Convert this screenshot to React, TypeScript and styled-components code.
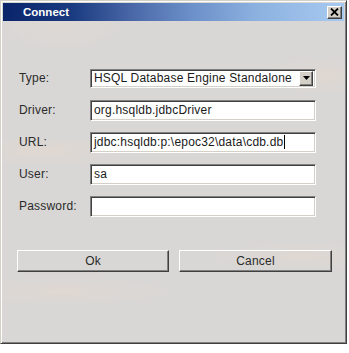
import * as React from 'react';
import styled, { createGlobalStyle } from 'styled-components';

const Global = createGlobalStyle`
  html, body {
    margin: 0;
    padding: 0;
    background: #ffffff;
  }
  * {
    box-sizing: border-box;
  }
`;

const Window = styled.div`
  width: 347px;
  height: 344px;
  display: flex;
  flex-direction: column;
  padding: 2px;
  border-top: 1px solid #d4d0c8;
  border-left: 1px solid #d4d0c8;
  border-right: 1px solid #404040;
  border-bottom: 1px solid #404040;
  box-shadow: inset 1px 1px 0 #ffffff, inset -1px -1px 0 #808080;
  background:
    radial-gradient(ellipse 90px 14px at 40px 150px, rgba(232, 216, 206, 0.45), transparent),
    radial-gradient(ellipse 70px 16px at 320px 75px, rgba(232, 216, 206, 0.45), transparent),
    radial-gradient(ellipse 110px 14px at 60px 290px, rgba(232, 216, 206, 0.4), transparent),
    radial-gradient(ellipse 90px 12px at 300px 255px, rgba(232, 216, 206, 0.4), transparent),
    radial-gradient(ellipse 60px 30px at 60px 20px, rgba(232, 220, 212, 0.4), transparent),
    #d9d7d5;
  font-family: 'Liberation Sans', Arial, sans-serif;
`;

const TitleBar = styled.div`
  height: 18px;
  display: flex;
  align-items: center;
  justify-content: space-between;
  padding: 0 2px 0 20px;
  background: linear-gradient(
    to right,
    #0a246a 0%,
    #1a3a80 20%,
    #4a68a8 38%,
    #6b8fc8 55%,
    #8eb2e0 75%,
    #a6caf0 100%
  );
`;

const Title = styled.span`
  color: #ffffff;
  font-weight: bold;
  font-size: 11.5px;
`;

const CloseButton = styled.button`
  width: 15px;
  height: 13px;
  padding: 0;
  display: flex;
  align-items: center;
  justify-content: center;
  background: #d4d0c8;
  border-top: 1px solid #ffffff;
  border-left: 1px solid #ffffff;
  border-right: 1px solid #404040;
  border-bottom: 1px solid #404040;
  box-shadow: inset -1px -1px 0 #808080;
`;

const Form = styled.div`
  display: grid;
  grid-template-columns: 71px 226px;
  grid-auto-rows: 32px;
  align-items: center;
  padding: 41px 0 0 16px;
`;

const Label = styled.span`
  font-size: 12px;
  letter-spacing: 0.2px;
  color: #2a2a2a;
`;

const Field = styled.div<{ $h?: number }>`
  height: ${p => p.$h || 21}px;
  display: flex;
  align-items: center;
  background: #ffffff;
  border-top: 1px solid #808080;
  border-left: 1px solid #808080;
  border-right: 1px solid #ffffff;
  border-bottom: 1px solid #ffffff;
  box-shadow: inset 1px 1px 0 #404040, inset -1px -1px 0 #d4d0c8;
  padding: 0 2px 0 2px;
  font-size: 12px;
  letter-spacing: 0.2px;
  color: #1a1a1a;
  white-space: nowrap;
  overflow: hidden;
`;

const FieldText = styled.span`
  flex: 1;
  padding-left: 1px;
`;

const Caret = styled.span`
  display: inline-block;
  width: 1px;
  height: 14px;
  margin-left: 1px;
  vertical-align: middle;
  background: #000000;
`;

const DropButton = styled.span`
  width: 14px;
  height: 15px;
  display: flex;
  align-items: center;
  justify-content: center;
  background: #d4d0c8;
  border-top: 1px solid #ffffff;
  border-left: 1px solid #ffffff;
  border-right: 1px solid #404040;
  border-bottom: 1px solid #404040;
  box-shadow: inset -1px -1px 0 #808080;
`;

const Buttons = styled.div`
  display: flex;
  gap: 10px;
  padding: 28px 0 0 14px;
`;

const PushButton = styled.button<{ $w: number }>`
  width: ${p => p.$w}px;
  height: 22px;
  padding: 0;
  background: transparent;
  border-top: 1px solid #ffffff;
  border-left: 1px solid #ffffff;
  border-right: 1px solid #404040;
  border-bottom: 1px solid #404040;
  box-shadow: inset -1px -1px 0 #808080;
  font-family: 'Liberation Sans', Arial, sans-serif;
  font-size: 12px;
  letter-spacing: 0.2px;
  color: #2a2a2a;
`;

export default function App() {
  return (
    <>
      <Global />
      <Window>
        <TitleBar>
          <Title>Connect</Title>
          <CloseButton>
            <svg width="9" height="8" viewBox="0 0 9 8">
              <path d="M1 0.5 L8 7.5 M8 0.5 L1 7.5" stroke="#000" strokeWidth="1.8" />
            </svg>
          </CloseButton>
        </TitleBar>
        <Form>
          <Label>Type:</Label>
          <Field $h={19}>
            <FieldText>HSQL Database Engine Standalone</FieldText>
            <DropButton>
              <svg width="7" height="4" viewBox="0 0 7 4">
                <path d="M0 0 H7 L3.5 4 Z" fill="#000" />
              </svg>
            </DropButton>
          </Field>
          <Label>Driver:</Label>
          <Field>
            <FieldText>org.hsqldb.jdbcDriver</FieldText>
          </Field>
          <Label>URL:</Label>
          <Field>
            <FieldText>
              jdbc:hsqldb:p:\epoc32\data\cdb.db
              <Caret />
            </FieldText>
          </Field>
          <Label>User:</Label>
          <Field>
            <FieldText>sa</FieldText>
          </Field>
          <Label>Password:</Label>
          <Field />
        </Form>
        <Buttons>
          <PushButton $w={152}>Ok</PushButton>
          <PushButton $w={153}>Cancel</PushButton>
        </Buttons>
      </Window>
    </>
  );
}
